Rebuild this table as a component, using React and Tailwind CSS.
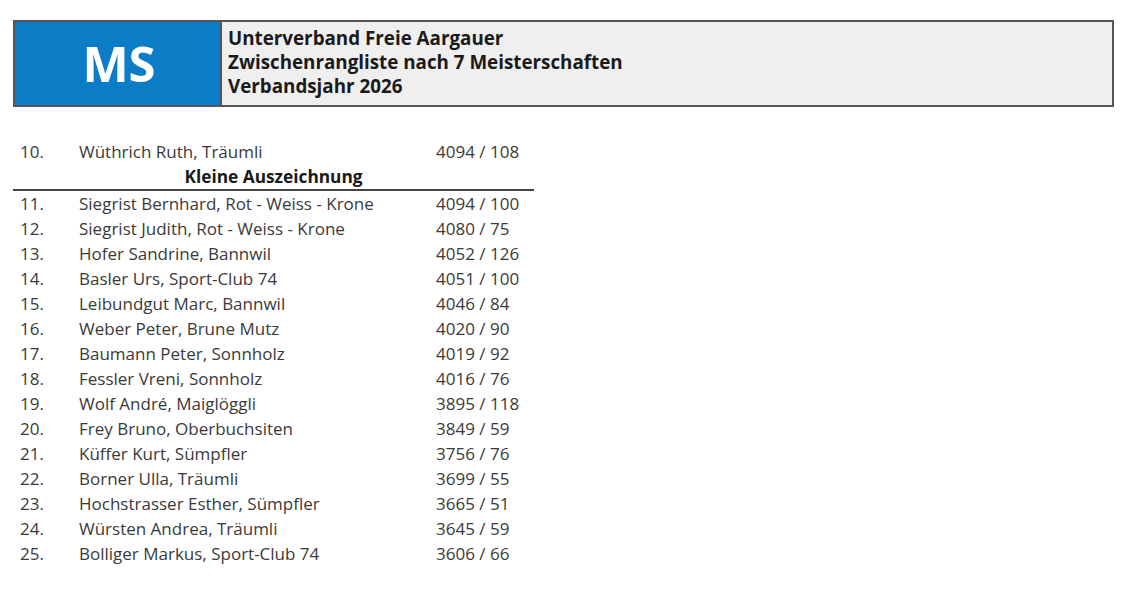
import React from "react";

const rows = [
  ["11.", "Siegrist Bernhard, Rot - Weiss - Krone", "4094 / 100"],
  ["12.", "Siegrist Judith, Rot - Weiss - Krone", "4080 / 75"],
  ["13.", "Hofer Sandrine, Bannwil", "4052 / 126"],
  ["14.", "Basler Urs, Sport-Club 74", "4051 / 100"],
  ["15.", "Leibundgut Marc, Bannwil", "4046 / 84"],
  ["16.", "Weber Peter, Brune Mutz", "4020 / 90"],
  ["17.", "Baumann Peter, Sonnholz", "4019 / 92"],
  ["18.", "Fessler Vreni, Sonnholz", "4016 / 76"],
  ["19.", "Wolf André, Maiglöggli", "3895 / 118"],
  ["20.", "Frey Bruno, Oberbuchsiten", "3849 / 59"],
  ["21.", "Küffer Kurt, Sümpfler", "3756 / 76"],
  ["22.", "Borner Ulla, Träumli", "3699 / 55"],
  ["23.", "Hochstrasser Esther, Sümpfler", "3665 / 51"],
  ["24.", "Würsten Andrea, Träumli", "3645 / 59"],
  ["25.", "Bolliger Markus, Sport-Club 74", "3606 / 66"],
];

function Row({ n, name, score }) {
  return (
    <div className="flex h-[25px] items-center">
      <div className="w-[66px] pl-[7px]">{n}</div>
      <div className="w-[357px] whitespace-nowrap">{name}</div>
      <div className="whitespace-nowrap">{score}</div>
    </div>
  );
}

export default function App() {
  return (
    <div
      className="min-h-[592px] w-[1126px] bg-white text-[#3a3a3a]"
      style={{ fontFamily: '"Open Sans", "Noto Sans", sans-serif' }}
    >
      <div className="pl-[13px] pr-[12px] pt-[20px]">
        <div className="flex h-[87px] border-2 border-[#555]">
          <div className="flex w-[207px] items-center justify-center border-r-2 border-[#555] bg-[#0b7dc6] pl-[3px]">
            <span className="text-[49px] font-bold leading-none text-white">MS</span>
          </div>
          <div className="flex flex-1 flex-col justify-center bg-[#efefef] pb-[4px] pl-[6px] text-[18.8px] font-bold leading-[24px] text-[#1a1a1a]">
            <div>Unterverband Freie Aargauer</div>
            <div>Zwischenrangliste nach 7 Meisterschaften</div>
            <div>Verbandsjahr 2026</div>
          </div>
        </div>
      </div>

      <div className="mt-[32px] w-[534px] pl-[13px] text-[17px]">
        <Row n="10." name="Wüthrich Ruth, Träumli" score="4094 / 108" />
        <div className="flex h-[27px] items-center justify-center border-b-2 border-[#444] text-[17.3px] font-bold text-[#1a1a1a]">
          Kleine Auszeichnung
        </div>
        {rows.map((r) => (
          <Row key={r[0]} n={r[0]} name={r[1]} score={r[2]} />
        ))}
      </div>
    </div>
  );
}
